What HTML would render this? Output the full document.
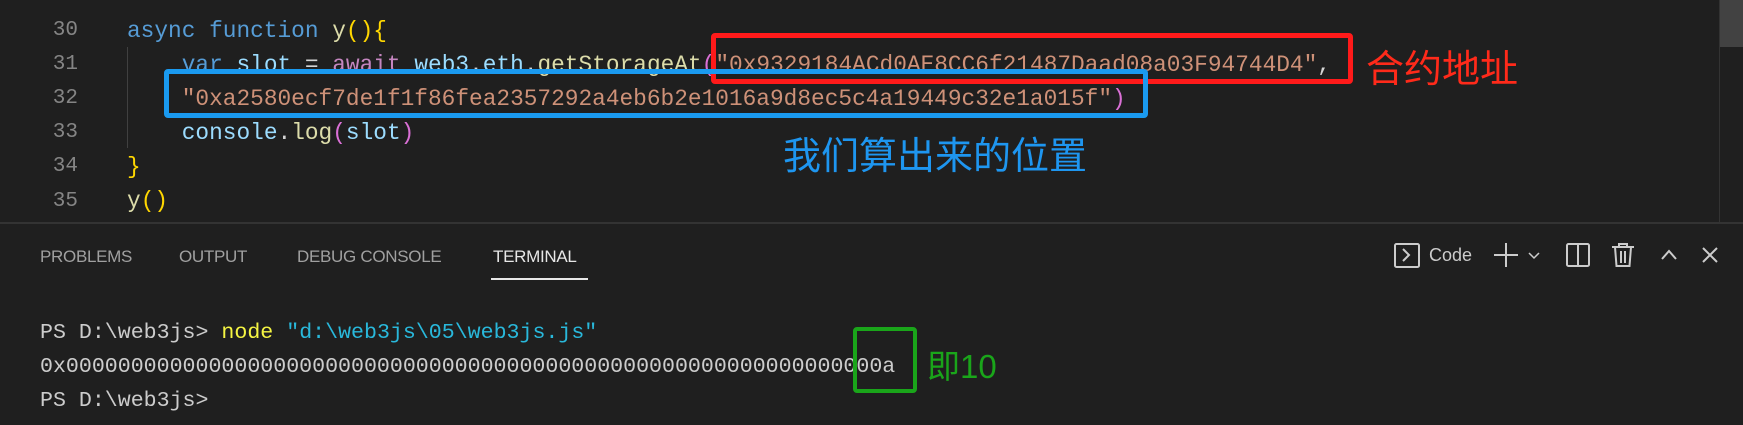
<!DOCTYPE html>
<html><head><meta charset="utf-8"><style>
body{margin:0;width:1743px;height:425px;background:#1f1f1f;overflow:hidden;position:relative;font-family:"Liberation Mono",monospace}
.ln{position:absolute;left:0;width:78px;text-align:right;color:#858585;font-size:21px}
.code{position:absolute;left:127px;font-size:22.8px;color:#d4d4d4}
.l{height:34px;line-height:34px;white-space:pre}
.k{color:#569cd6}.f{color:#dcdcaa}.b{color:#ffd700}.p{color:#da70d6}.s{color:#ce9178}.v{color:#9cdcfe}.a{color:#c586c0}
.box{position:absolute;border-radius:4px;box-sizing:border-box}
.cjk{position:absolute;font-family:"Liberation Sans","Noto Sans CJK SC",sans-serif;white-space:nowrap}
.tab{position:absolute;top:247px;font-family:"Liberation Sans",sans-serif;font-size:17px;color:#a0a0a0;letter-spacing:-0.3px}
.t{position:absolute;left:40px;font-size:21.6px;color:#cccccc;white-space:pre;line-height:34px}
</style></head><body>
<div class="ln" style="top:-22px;height:34px;line-height:34px">29</div>
<div class="ln" style="top:14px;height:34px;line-height:34px">30</div>
<div class="ln" style="top:48px;height:34px;line-height:34px">31</div>
<div class="ln" style="top:82px;height:34px;line-height:34px">32</div>
<div class="ln" style="top:116px;height:34px;line-height:34px">33</div>
<div class="ln" style="top:150px;height:34px;line-height:34px">34</div>
<div class="ln" style="top:185px;height:34px;line-height:34px">35</div>
<div style="position:absolute;left:127px;top:47px;width:1px;height:101px;background:#404040"></div>
<div class="code" style="top:14px"><div class="l"><span class="k">async function</span> <span class="f">y</span><span class="b">(){</span></div><div class="l">    <span class="k">var</span> <span class="v">slot</span> = <span class="a">await</span> <span class="v">web3</span>.<span class="v">eth</span>.<span class="f">getStorageAt</span><span class="p">(</span><span class="s">"0x9329184ACd0AE8CC6f21487Daad08a03F94744D4"</span>,</div><div class="l">    <span class="s">"0xa2580ecf7de1f1f86fea2357292a4eb6b2e1016a9d8ec5c4a19449c32e1a015f"</span><span class="p">)</span></div><div class="l">    <span class="v">console</span>.<span class="f">log</span><span class="p">(</span><span class="v">slot</span><span class="p">)</span></div><div class="l"><span class="b">}</span></div><div class="l"><span class="f">y</span><span class="b">()</span></div></div>
<div class="box" style="left:711px;top:33px;width:642px;height:51px;border:5px solid #ff1a1a"></div>
<div class="cjk" style="left:1366px;top:38px;font-size:38px;color:#ff2a1a">合约地址</div>
<div class="box" style="left:164px;top:69px;width:984px;height:49px;border:5px solid #1a9af0"></div>
<div class="cjk" style="left:783px;top:125px;font-size:38px;color:#1e96f0">我们算出来的位置</div>
<div style="position:absolute;left:1719px;top:0;width:1px;height:222px;background:#333"></div>
<div style="position:absolute;left:1720px;top:0;width:23px;height:47px;background:#424242"></div>
<div style="position:absolute;left:0;top:222px;width:1743px;height:2px;background:#333"></div>
<div class="tab" style="left:40px">PROBLEMS</div>
<div class="tab" style="left:179px">OUTPUT</div>
<div class="tab" style="left:297px">DEBUG CONSOLE</div>
<div class="tab" style="left:493px;color:#e7e7e7">TERMINAL</div>
<div style="position:absolute;left:491px;top:278px;width:97px;height:2px;background:#e7e7e7"></div>
<svg style="position:absolute;left:1380px;top:235px" width="363" height="45" fill="none" stroke="#cccccc" stroke-width="2">
<rect x="15" y="9" width="24" height="23" rx="1.5"/><path d="M23 14l6 6-6 6"/>
<path d="M114 20h24M126 8v24" /><path d="M149 18l5 5 5-5" stroke-width="1.5"/>
<rect x="187" y="9" width="22" height="22" rx="1.5"/><path d="M198 9v22"/>
<path d="M232 12h22M239 12v-3h8v3M235 12l1.5 19h13l1.5-19M241 16v12M245 16v12"/>
<path d="M282 24l7-8 7 8"/><path d="M323 13l14 14M337 13l-14 14"/>
</svg>
<div style="position:absolute;left:1429px;top:245px;font-family:'Liberation Sans',sans-serif;font-size:18px;color:#cccccc">Code</div>
<div class="t" style="top:316px">PS D:\web3js&gt; <span style="color:#f5f543">node</span> <span style="color:#29b8db">"d:\web3js\05\web3js.js"</span></div>
<div class="t" style="top:350px">0x000000000000000000000000000000000000000000000000000000000000000a</div>
<div class="t" style="top:384px">PS D:\web3js&gt;</div>
<div class="box" style="left:853px;top:327px;width:64px;height:66px;border:4px solid #1aa51a"></div>
<div class="cjk" style="left:927px;top:340px;font-size:33px;color:#1aa51a">即10</div>
</body></html>
